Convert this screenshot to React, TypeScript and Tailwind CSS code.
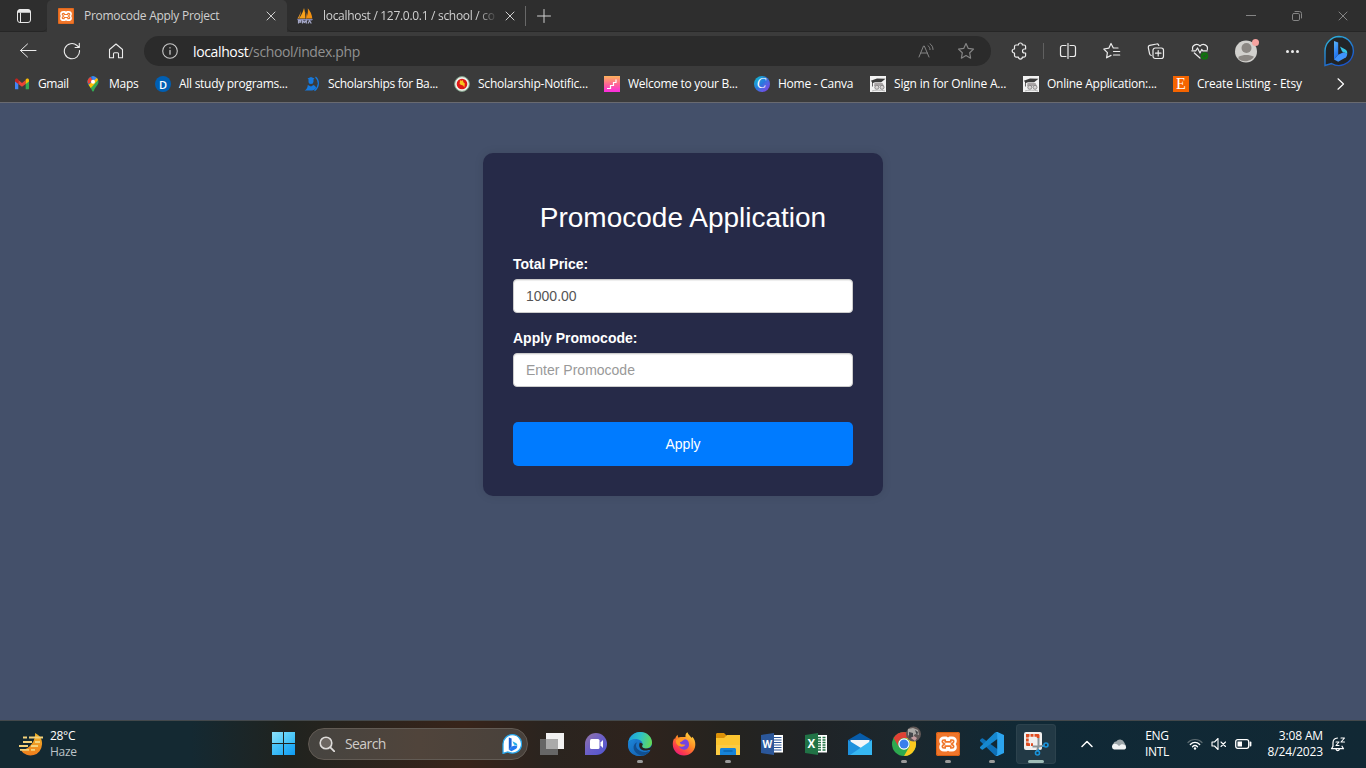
import React from "react";

type IconProps = { className?: string };

const line = {
  fill: "none",
  stroke: "currentColor",
  strokeLinecap: "round" as const,
  strokeLinejoin: "round" as const,
};

function XamppLogo({ className }: IconProps) {
  return (
    <svg viewBox="0 0 24 24" className={className}>
      <rect x="0" y="0" width="24" height="24" rx="2" fill="#f0762b" />
      <rect x="0.5" y="0.5" width="23" height="23" rx="2" fill="none" stroke="#d95f12" />
      <path
        d="M8 4.500h2c1 0 1.300.8 2 .8s1-.8 2-.8h2c3 0 4.800 1.800 4.800 4.300 0 1.300-.4 2.300-1.100 3.200.7.900 1.100 1.900 1.100 3.200 0 2.500-1.800 4.300-4.800 4.300h-2c-1 0-1.300-.8-2-.8s-1 .8-2 .8H8c-3 0-4.800-1.800-4.800-4.300 0-1.300.4-2.300 1.100-3.200-.7-.9-1.100-1.900-1.100-3.200C3.200 6.300 5 4.500 8 4.500z"
        fill="#fff"
      />
      <g fill="none" stroke="#f0762b" strokeWidth="1.700" strokeLinecap="round" strokeLinejoin="round">
        <path d="M9.200 9.800V8H8c-1.200 0-1.700.6-1.700 1.400C6.300 11 8 11.300 8.700 12c-.7.7-2.400 1-2.400 2.600 0 .8.5 1.400 1.700 1.400h1.200v-1.800h5.600V16H16c1.200 0 1.700-.6 1.700-1.400 0-1.600-1.700-1.900-2.400-2.600.7-.7 2.400-1 2.400-2.600 0-.8-.5-1.400-1.700-1.400h-1.200v1.800z" />
      </g>
    </svg>
  );
}

function PmaLogo() {
  return (
    <svg viewBox="0 0 16 16" className="size-4">
      <path d="M7 0C5.800 4.500 4 8 1.800 10.500h6.400C8.400 7 8 3.300 7 0z" fill="#f7a11b" />
      <path d="M10.800.3C11.200 4 10.600 7.500 9 10.500h6.300C14.900 6.500 13.200 3 10.800.3z" fill="#f29111" />
      <path d="M3.800 3C3.200 5.800 2 8.300.4 10.500h1.400c1.300-2.200 2-4.700 2-7.500z" fill="#e8962a" />
      <path d="M8.500 3.500c.6 2.300.6 4.700 0 7h1.300c.2-2.700-.2-5-1.300-7z" fill="#d9801a" />
      <path d="M0 11h16l-1 1.500H1z" fill="#8286b4" />
      <path d="M1.500 15.500v-2.800h2.200v1.500H1.800M5.500 15.500v-2.800l1.900 1.800 1.900-1.800v2.800M11 15.500l1.600-2.800 1.700 2.800" fill="none" stroke="#a6a9c9" strokeWidth="1.200" />
    </svg>
  );
}

function BingMark({ className }: IconProps) {
  return (
    <svg viewBox="0 0 32 32" className={className}>
      <defs>
        <linearGradient id="bingRing" x1="0" y1="0" x2="0.6" y2="1">
          <stop offset="0" stopColor="#2fb9dc" />
          <stop offset="1" stopColor="#1b55c9" />
        </linearGradient>
        <linearGradient id="bingB" x1="0" y1="0" x2="0.3" y2="1">
          <stop offset="0" stopColor="#5cb5f7" />
          <stop offset="1" stopColor="#1b6df0" />
        </linearGradient>
      </defs>
      <path d="M16 1.500a14.500 14.500 0 1 1-7.500 27L2 30.500V16A14.400 14.400 0 0 1 16 1.500z" fill="#222426" stroke="url(#bingRing)" strokeWidth="1.400" />
      <path d="M11 6l4.200 1.600v12.200L11 24.500z" fill="url(#bingB)" />
      <path d="M11 24.500l4.200-4.700 5.300-2.600 3.700 1.200c0 2.200-.6 3.600-2.400 4.700l-6.600 3.700z" fill="#3f93fb" />
      <path d="M17 11.500l5.400 3c1.500.9 2 2.100 1.800 4.200l-5.100-2.200z" fill="#36c5e6" />
    </svg>
  );
}

function BingSmall() {
  return (
    <svg viewBox="0 0 20 20" className="size-5">
      <path d="M10.300.7a9.200 9.200 0 1 1-4.500 17.200L1 19.400V10A9.300 9.300 0 0 1 10.300.7z" fill="#fff" stroke="#27a5ea" strokeWidth="1.300" />
      <path d="M6.800 3.500l2.800 1.100v8.200l-2.800 3z" fill="#1b62d4" />
      <path d="M6.800 15.800l3-3.200 3-1.200 2.400.9c0 1.300-.5 2.100-1.500 2.700l-4.300 2.300z" fill="#2378ef" />
      <path d="M10.500 7.300l3.400 1.800c1.100.7 1.500 1.600 1.300 3l-3.300-1.600z" fill="#25afe7" />
    </svg>
  );
}

function Graduate() {
  return (
    <svg viewBox="0 0 16 16" className="size-4">
      <rect width="16" height="16" fill="#f2f2f2" />
      <path d="M.8 4.700L7 2.500l8.500.3-4.300 3.500L5 6.300 2.800 7v3.500H2V6z" fill="#3b3b3b" />
      <path d="M4.500 7h8l1.500 3H4z" fill="#a9a4a5" />
      <circle cx="6.800" cy="11.300" r="2" fill="#d8d4d4" stroke="#8b8b8b" />
      <circle cx="12" cy="11.300" r="2" fill="#d8d4d4" stroke="#8b8b8b" />
      <path d="M2 15c3-1.200 9-1.200 13 0" stroke="#b5b5b5" fill="none" />
    </svg>
  );
}

function BookmarkIcon({ kind }: { kind: string }) {
  switch (kind) {
    case "gmail":
      return (
        <svg viewBox="0 0 16 16" className="size-4">
          <path d="M1 4v8.700c0 .3.300.6.600.6H4.300V6.500z" fill="#4285f4" />
          <path d="M15 4v8.700c0 .3-.3.600-.6.600h-2.700V6.500z" fill="#34a853" />
          <path d="M4.300 4.100L8 6.900l3.700-2.800v3.800L8 10.700 4.300 7.900z" fill="#ea4335" />
          <path d="M1 4.200c0-1.500 1.700-2 2.700-1.200l.6.500v4.400L1 5.500z" fill="#c5221f" />
          <path d="M15 4.200c0-1.500-1.700-2-2.700-1.200l-.6.500v4.400L15 5.500z" fill="#fbbc04" />
        </svg>
      );
    case "maps":
      return (
        <svg viewBox="0 0 16 16" className="size-4">
          <defs>
            <clipPath id="pin">
              <path d="M8 .3a5.500 5.500 0 0 1 5.500 5.500c0 3.500-3.400 5-4.500 9-.3 1.100-1.700 1.100-2 0-1.100-4-4.500-5.500-4.500-9A5.500 5.500 0 0 1 8 .3z" />
            </clipPath>
          </defs>
          <g clipPath="url(#pin)">
            <rect width="16" height="16" fill="#34a853" />
            <path d="M0 0h9L8 6 2 10H0z" fill="#1a73e8" />
            <path d="M0 0h5l3 5-5 3z" fill="#ea4335" />
            <path d="M7 0h9L8 6z" fill="#4285f4" />
            <path d="M2 10l11-9v3L5 13z" fill="#fbbc04" />
          </g>
          <circle cx="8" cy="5.800" r="2" fill="#fff" />
        </svg>
      );
    case "study":
      return (
        <div className="flex size-4 items-center justify-center rounded-full bg-[#005fb3] font-['Open_Sans',sans-serif] text-[11px] leading-none font-semibold text-white">
          D
        </div>
      );
    case "scholar":
      return (
        <svg viewBox="0 0 16 16" className="size-4">
          <path d="M3.500 2.500L7 1l3.500 1.500-1 .8v2.300a2.500 2.500 0 0 1-5 0V3.300z" fill="#1779dc" />
          <path d="M.5 14.500c2-.8 3-2.500 3.300-5.500L7 10.500 9.500 9c2 1 2.500 2 2.500 3-.9 1.300-2.500 2.300-4 2.500z" fill="#1779dc" />
          <path d="M11.500 1c4 3.500 4 9.500-1 13.800" fill="none" stroke="#1779dc" strokeWidth="1.200" />
        </svg>
      );
    case "bd":
      return (
        <svg viewBox="0 0 16 16" className="size-4">
          <circle cx="8" cy="8" r="7.400" fill="#eef2ec" stroke="#7e9f88" />
          <circle cx="8" cy="8" r="5.300" fill="#df1717" />
          <path d="M6 4.200l1.800.5 1-.7.6 2.300 1.400 1.300-.4 3.800-1.300-2L7.300 9 5.600 8z" fill="#f7c51e" />
        </svg>
      );
    case "stairs":
      return (
        <svg viewBox="0 0 16 16" className="size-4">
          <defs>
            <linearGradient id="stairsFill" x1="0" y1="0" x2="0" y2="1">
              <stop offset="0" stopColor="#ffb35c" />
              <stop offset="0.550" stopColor="#fd6199" />
              <stop offset="1" stopColor="#fb2be0" />
            </linearGradient>
          </defs>
          <rect width="16" height="16" fill="url(#stairsFill)" />
          <path d="M3 12.500h3.500v-3h3v-3h2.500v-3" fill="none" stroke="#fff" strokeWidth="1.200" />
        </svg>
      );
    case "canva":
      return (
        <div className="flex size-4 items-center justify-center rounded-full bg-linear-to-br from-[#0cc0c6] via-[#2c75df] to-[#7d2ae8] pr-px font-['Liberation_Serif',serif] text-[14px] leading-none text-white italic">
          C
        </div>
      );
    case "graduate":
      return <Graduate />;
    default:
      return (
        <div className="flex size-4 items-center justify-center bg-[#f56400] font-['Liberation_Serif',serif] text-[16px] leading-none text-white">
          E
        </div>
      );
  }
}

const bookmarks = [
  { kind: "gmail", label: "Gmail", box: "w-[71px]", track: "tracking-[-0.4px]" },
  { kind: "maps", label: "Maps", box: "w-[70px]", track: "tracking-[-0.25px]" },
  { kind: "study", label: "All study programs...", box: "w-[149px]", track: "tracking-[-0.28px]" },
  { kind: "scholar", label: "Scholarships for Ba...", box: "w-[150px]", track: "tracking-[-0.32px]" },
  { kind: "bd", label: "Scholarship-Notific...", box: "w-[150px]", track: "tracking-[-0.22px]" },
  { kind: "stairs", label: "Welcome to your B...", box: "w-[150px]", track: "tracking-[-0.28px]" },
  { kind: "canva", label: "Home - Canva", box: "w-[116px]", track: "tracking-[-0.25px]" },
  { kind: "graduate", label: "Sign in for Online A...", box: "w-[153px]", track: "tracking-[-0.18px]" },
  { kind: "graduate", label: "Online Application:...", box: "w-[150px]", track: "tracking-[-0.25px]" },
  { kind: "etsy", label: "Create Listing - Etsy", box: "w-[146px]", track: "tracking-[-0.2px]" },
];

function CloseIcon({ className }: IconProps) {
  return (
    <svg viewBox="0 0 10 10" className={className}>
      <path d="M1 1l8 8M9 1L1 9" {...line} />
    </svg>
  );
}

function TabStrip() {
  return (
    <div className="flex h-8 items-stretch bg-[#2e2e2e] text-[#d0d0d0]">
      <div className="flex w-[47px] items-center justify-center rounded-br-[5px] border-b border-[#262626]">
        <svg viewBox="0 0 16 16" className="size-4 text-[#e8e8e8]">
          <rect x="1.500" y="1.500" width="13" height="13" rx="2.500" {...line} />
          <path d="M1.500 3.500a2 2 0 0 1 2-2h9a2 2 0 0 1 2 2v1.300h-13z" fill="currentColor" />
          <path d="M4.500 5v9" {...line} />
        </svg>
      </div>
      <div className="flex w-60 items-center rounded-t-[5px] bg-[#3b3b3b] pr-[11px] pl-[11px]">
        <XamppLogo className="size-4" />
        <span className="ml-[10px] flex-1 text-[12px] tracking-[-0.27px] whitespace-nowrap">Promocode Apply Project</span>
        <CloseIcon className="size-[10px]" />
      </div>
      <div className="flex flex-1 items-center rounded-bl-[5px] border-b border-[#262626] pl-[10px]">
        <PmaLogo />
        <span className="ml-[10px] w-[175px] mask-r-from-88% text-[12px] tracking-[-0.3px] whitespace-nowrap">
          localhost / 127.0.0.1 / school / co
        </span>
        <CloseIcon className="ml-[7px] size-[10px]" />
        <div className="ml-[10px] h-5 w-px bg-[#686868]" />
        <svg viewBox="0 0 14 14" className="ml-[11px] size-[14px]">
          <path d="M7 .5v13M.5 7h13" {...line} />
        </svg>
        <div className="ml-auto flex w-[138px] text-[#858585]">
          <div className="flex w-[46px] items-center justify-center">
            <div className="h-px w-[10px] bg-[#858585]" />
          </div>
          <svg viewBox="0 0 10 10" className="mx-[18px] size-[10px]">
            <rect x="0.500" y="2.500" width="7" height="7" rx="1.300" {...line} />
            <path d="M3 .5h4.500a2 2 0 0 1 2 2V7" {...line} />
          </svg>
          <CloseIcon className="mx-[18px] size-[10px]" />
        </div>
      </div>
    </div>
  );
}

function Slot({ children }: { children: React.ReactNode }) {
  return <div className="flex w-11 shrink-0 items-center justify-center">{children}</div>;
}

function AddressBar() {
  return (
    <div className="flex h-[38px] items-center pl-[6px] text-[#ececec]">
      <Slot>
        <svg viewBox="0 0 18 18" className="size-[18px]">
          <path d="M17 8.500H1.500M8.500 2L1.500 8.500l7 6.500" {...line} />
        </svg>
      </Slot>
      <Slot>
        <svg viewBox="0 0 18 18" className="size-[18px]">
          <path d="M16.500 8.500A7.600 7.600 0 1 1 14 3.500L16 5.300M16.300 1.300v4.200h-4.200" {...line} strokeWidth="1.100" />
        </svg>
      </Slot>
      <Slot>
        <svg viewBox="0 0 16 16" className="size-4">
          <path d="M8 1l6.500 5.500v8.200h-4v-4a1 1 0 0 0-1-1h-3a1 1 0 0 0-1 1v4h-4V6.500z" {...line} strokeWidth="1.100" />
        </svg>
      </Slot>
      <div className="ml-[6px] flex h-[30px] w-[847px] items-center rounded-full bg-[#2b2b2b] pr-4 pl-[18px]">
        <svg viewBox="0 0 16 16" className="size-4 text-[#c8c8c8]">
          <circle cx="8" cy="8" r="7.300" {...line} strokeWidth="1.100" />
          <path d="M8 7.300v3.900M8 4.700v.2" {...line} strokeWidth="1.300" />
        </svg>
        <span className="ml-[15px] flex-1 text-[14px] tracking-[-0.37px] text-[#919191]">
          <span className="text-white">localhost</span>/school/index.php
        </span>
        <svg viewBox="0 0 16 16" className="size-4 text-[#858585]">
          <path d="M1 14L5.500 3h.8L11 14M2.700 10h6.700M10 2.700c1.300 1 2 2.200 2 3.900M12 .8c2 1.400 3 3.300 3 5.700" {...line} />
        </svg>
        <svg viewBox="0 0 18 18" className="ml-[23px] size-[18px] text-[#858585]">
          <path d="M9 1.500l2.300 4.900 5.200.7-3.800 3.700.9 5.400L9 13.600l-4.600 2.600.9-5.400L1.500 7.100l5.200-.7z" {...line} strokeWidth="1.200" />
        </svg>
      </div>
      <div className="ml-[7px] flex">
        <Slot>
          <svg viewBox="0 0 18 18" className="size-[18px]">
            <path d="M5 3h2.400a2 2 0 0 1 4 0h1.700c1 0 1.500.5 1.500 1.500V7h-1.100a2 2 0 0 0 0 4h1.100v2.600c0 1-.5 1.500-1.500 1.500h-1.700a2 2 0 0 1-4 0H5c-1 0-1.500-.5-1.500-1.500V11h-.3a2 2 0 0 1 0-4h.3V4.500C3.500 3.500 4 3 5 3z" {...line} strokeWidth="1.200" />
          </svg>
        </Slot>
      </div>
      <div className="mr-[2px] ml-px h-4 w-px bg-[#606060]" />
      <Slot>
        <svg viewBox="0 0 18 16" className="h-4 w-[18px]">
          <path d="M7 2.500H3.500a2 2 0 0 0-2 2v7a2 2 0 0 0 2 2H7M11 2.500h3.500a2 2 0 0 1 2 2v7a2 2 0 0 1-2 2H11M9 .5v15" {...line} strokeWidth="1.200" />
        </svg>
      </Slot>
      <Slot>
        <svg viewBox="0 0 18 18" className="size-[18px]">
          <path d="M15 6H10.300L8 1.500 5.800 6.200.8 7l3.600 3.600-.8 5.200L8 13.400M10.500 9.500h6.200M10.500 13h6.200M11 6h1" {...line} strokeWidth="1.200" />
        </svg>
      </Slot>
      <Slot>
        <svg viewBox="0 0 18 18" className="size-[18px]">
          <rect x="6" y="6" width="10.500" height="10.500" rx="2.200" {...line} strokeWidth="1.200" />
          <path d="M11.200 8.500v5.500M8.500 11.200H14M4.300 13.500c-1-.2-1.500-.7-1.700-1.600L1.300 5.700c-.2-1.100.3-2 1.400-2.300L9.500 2c1.200-.3 2 .4 2.300 1.500" {...line} strokeWidth="1.200" />
        </svg>
      </Slot>
      <Slot>
        <svg viewBox="0 0 18 18" className="size-[18px]">
          <path d="M1.700 7.500C.6 3 6 .8 9 4c3-3.200 8.400-1 7.300 3.500M.8 8.800h4l1.700-2.800L9 11l1.700-3.600 1.100 1.400h4.500M3.300 11L9 16" {...line} strokeWidth="1.200" />
          <circle cx="13.500" cy="14" r="3.800" fill="#11710f" />
          <path d="M12 14l1.200 1.200 2-2.300" fill="none" stroke="#3b3b3b" />
        </svg>
      </Slot>
      <div className="ml-[3px] flex">
        <Slot>
          <svg viewBox="0 0 24 24" className="size-6">
            <circle cx="11" cy="12.500" r="11" fill="#d1d0cd" />
            <circle cx="11.500" cy="9" r="5" fill="#8b8783" />
            <path d="M3.500 17.800c4.500-2.300 11-2.300 15.500 0a11 11 0 0 1-15.500 2.200z" fill="#8b8783" />
            <circle cx="20.500" cy="3.500" r="3.500" fill="#f5a3a0" />
          </svg>
        </Slot>
      </div>
      <div className="ml-px flex">
        <Slot>
          <div className="flex gap-[2px]">
            <span className="size-[3px] rounded-full bg-[#ececec]" />
            <span className="size-[3px] rounded-full bg-[#ececec]" />
            <span className="size-[3px] rounded-full bg-[#ececec]" />
          </div>
        </Slot>
      </div>
      <div className="ml-[3px] flex">
        <Slot>
          <BingMark className="size-8" />
        </Slot>
      </div>
    </div>
  );
}

function BookmarksBar() {
  return (
    <div className="flex h-8 items-center border-b border-[#696a70] pb-[5px] pl-[14px] text-white">
      {bookmarks.map((b) => (
        <div key={b.label} className={`flex shrink-0 items-center gap-2 ${b.box}`}>
          <BookmarkIcon kind={b.kind} />
          <span className={`text-[12px] leading-4 whitespace-nowrap ${b.track}`}>{b.label}</span>
        </div>
      ))}
      <svg viewBox="0 0 8 12" className="ml-[18px] h-3 w-2">
        <path d="M1 .8L6.500 6 1 11.200" {...line} strokeWidth="1.200" />
      </svg>
    </div>
  );
}

function PromoForm() {
  return (
    <main className="flex flex-1 items-start justify-center bg-[#44506a] pt-[50px] font-['Liberation_Sans',Arial,sans-serif]">
      <div className="h-[343px] w-[400px] rounded-[10px] bg-[#262a48] p-[30px] text-[14px] leading-5 text-white shadow-[0_0_10px_rgba(0,0,0,0.1)]">
        <h2 className="mt-[19px] mb-[21px] text-center text-[28px] leading-[31px]">Promocode Application</h2>
        <label className="mb-[5px] block font-bold">Total Price:</label>
        <input
          className="mb-[15px] block h-[34px] w-full rounded-[4px] border border-[#ccc] bg-white px-3 text-[#555] shadow-[inset_0_1px_1px_rgba(0,0,0,0.075)]"
          defaultValue="1000.00"
        />
        <label className="mb-[5px] block font-bold">Apply Promocode:</label>
        <input
          className="block h-[34px] w-full rounded-[4px] border border-[#ccc] bg-white px-3 shadow-[inset_0_1px_1px_rgba(0,0,0,0.075)] placeholder:text-[#999]"
          placeholder="Enter Promocode"
        />
        <button className="mt-[35px] h-11 w-full rounded-[5px] bg-[#007bff]">Apply</button>
      </div>
    </main>
  );
}

function TaskSlot({ children, open = false, active = false }: { children: React.ReactNode; open?: boolean; active?: boolean }) {
  return (
    <div className={`mx-[2px] flex h-10 w-10 shrink-0 flex-col items-center rounded-[4px] pt-2 ${active ? "bg-[#223945] ring-1 ring-[#2c424d] ring-inset" : ""}`}>
      {children}
      {open && <div className={`mt-1 h-[3px] shrink-0 rounded-full ${active ? "w-4 bg-[#9fbdb8]" : "w-[6px] bg-[#9a9a9a]"}`} />}
    </div>
  );
}

function TaskApps() {
  return (
    <div className="ml-[2px] flex items-center">
      <TaskSlot>
        <svg viewBox="0 0 24 24" className="size-6">
          <rect x="6" y="1" width="18" height="16" fill="#f1f1f1" />
          <rect x="0" y="7" width="18" height="16" fill="#666" />
          <rect x="6" y="7" width="12" height="10" fill="#aaa" />
        </svg>
      </TaskSlot>
      <TaskSlot>
        <svg viewBox="0 0 24 24" className="size-6">
          <defs>
            <linearGradient id="chatFill" x1="0" y1="0" x2="1" y2="1">
              <stop offset="0" stopColor="#9575a5" />
              <stop offset="0.500" stopColor="#6b5fc8" />
              <stop offset="1" stopColor="#4f55d0" />
            </linearGradient>
          </defs>
          <path d="M12 1a11 11 0 1 1 0 22H1V12A11 11 0 0 1 12 1z" fill="url(#chatFill)" />
          <rect x="6" y="7" width="9.500" height="10" rx="1.500" fill="#fff" />
          <path d="M16.500 10.500L19 8v8l-2.500-2.500z" fill="#fff" />
        </svg>
      </TaskSlot>
      <TaskSlot open>
        <svg viewBox="0 0 24 24" className="size-6">
          <defs>
            <linearGradient id="edgeTop" x1="0" y1="0.300" x2="1" y2="0.500">
              <stop offset="0" stopColor="#1ba0dc" />
              <stop offset="0.500" stopColor="#2fc2c5" />
              <stop offset="1" stopColor="#65d955" />
            </linearGradient>
            <linearGradient id="edgeLow" x1="0" y1="0" x2="0.500" y2="1">
              <stop offset="0" stopColor="#1c86d9" />
              <stop offset="1" stopColor="#1669b9" />
            </linearGradient>
          </defs>
          <circle cx="12" cy="12" r="12" fill="#1976cb" />
          <path d="M15 13.500l9-3c.3 5-3 6.500-6.500 6.300l5 1.500 2-4v-4z" fill="#28241f" />
          <path d="M.3 10.500C1.300 4.200 6.200 0 12.200 0 19.200 0 24 5 24 10.200c0 3.900-3 6.300-6.300 6.300-2.900 0-4.600-1.400-3.700-2.700 1.100-1.600.7-5.800-4.500-6.600C5.300 6.500 1.800 8 .3 10.500z" fill="url(#edgeTop)" />
          <path d="M.1 12.500C.8 9.500 4.200 6.900 9 7.200c-3 1.500-4.300 4.300-3.600 7.500.8 4.200 4.600 7.600 9.100 8.900C7 25.500-.6 20.600.1 12.500z" fill="url(#edgeLow)" />
          <path d="M9.300 10.300c-2 2.200-1.400 5.300.8 7.300 3 2.800 8.200 3 12.200.8-1.700 2.800-5 5-8.500 5.300C4.500 21.500 3.200 12.400 9.300 10.300z" fill="#104f91" />
          <path d="M11.800 10.500c1.500.6 3 .8 3 2 0 .8-1.300 1-.4 2.500.8 1.300 3.600 2 6.300 1.200.9-.3 1.800-.6 2.200-.3-3.500 5-14.400 2.800-11.100-5.400z" fill="#28241f" />
        </svg>
      </TaskSlot>
      <TaskSlot>
        <svg viewBox="0 0 24 24" className="size-6">
          <defs>
            <linearGradient id="foxFill" x1="0.900" y1="0" x2="0.200" y2="1">
              <stop offset="0" stopColor="#ffe142" />
              <stop offset="0.450" stopColor="#ff8b24" />
              <stop offset="0.800" stopColor="#fb3750" />
              <stop offset="1" stopColor="#e31587" />
            </linearGradient>
          </defs>
          <path d="M5.500 2.800l.6 2.600 2.700-.5L13.500 5C13.200 3 14 1 15.500.3c.3 2.400 2.700 3.200 4.200 5.800l.6-1.300C22.500 7 23.500 10 23.300 13 23 19 18 23.500 12 23.500S1 19 .8 12.800c-.1-2.500.4-4.500 1.400-6.500l.7 1C3.400 5.500 4.300 4 5.500 2.800z" fill="url(#foxFill)" />
          <path d="M8.200 9.700c2-.3 2.500-1.500 4.300-2.300 2.800-.4 4.500 2 4.500 4.800a5 5 0 0 1-10 1z" fill="#7345e0" />
          <path d="M4 8l4-2 3.800 1-2 2.300-2.200 1.200 1.500 1.700 4.500.6c-1.800 2-4 2.700-6.800 1.200C4.500 12.500 3.500 10.500 4 8z" fill="#ff9a24" />
        </svg>
      </TaskSlot>
      <TaskSlot open>
        <svg viewBox="0 0 24 24" className="size-6">
          <path d="M0 2.500C0 1.500.6 1 1.500 1H8l2.500 2.500v4H0z" fill="#dc9108" />
          <path d="M0 6h8l3-3h13v20H0z" fill="#fcc530" />
          <path d="M0 13h24v10H0z" fill="#fccb42" />
          <path d="M4 23v-5.500C4 16.500 4.800 16 5.700 16h12.600c1 0 1.700.5 1.700 1.500V23z" fill="#1683d8" />
          <path d="M7.500 19h9" stroke="#0b64af" strokeWidth="1.500" />
        </svg>
      </TaskSlot>
      <TaskSlot>
        <OfficeIcon letter="W" />
      </TaskSlot>
      <TaskSlot>
        <OfficeIcon letter="X" />
      </TaskSlot>
      <TaskSlot>
        <svg viewBox="0 0 24 24" className="size-6">
          <path d="M0 8l12-7 12 7v7H0z" fill="#075caa" />
          <path d="M2.500 8h19v9h-19z" fill="#f3f6f8" />
          <path d="M0 8l13 8-5 7H0z" fill="#1e91dd" />
          <path d="M24 8v15H2l11-7.500z" fill="#36b7f2" />
        </svg>
      </TaskSlot>
      <TaskSlot open>
        <svg viewBox="0 0 30 30" className="-mt-[6px] -mr-[6px] size-[30px] shrink-0">
          <circle cx="12" cy="18" r="12" fill="#2da94f" />
          <path d="M1.600 12A12 12 0 0 1 22.400 12H12a6 6 0 0 0-5.200 9z" fill="#df4135" />
          <path d="M22.400 12A12 12 0 0 1 12 30l5.200-9A6 6 0 0 0 12 12z" fill="#fcc91e" />
          <circle cx="12" cy="18" r="5.700" fill="#fff" />
          <circle cx="12" cy="18" r="4.500" fill="#397fed" />
          <circle cx="21.500" cy="8" r="7.500" fill="#5f5756" />
          <path d="M16 3l5-1 5 2 1 5-4-1-3 4-4-3z" fill="#aaa8a5" />
          <path d="M17 6l4 1v4l-4 1zM23 4l3 2-1 4z" fill="#43464b" />
          <path d="M19 12l3-2 3 2-2 3z" fill="#c79ca0" />
        </svg>
      </TaskSlot>
      <TaskSlot open>
        <XamppLogo className="size-6" />
      </TaskSlot>
      <TaskSlot open>
        <svg viewBox="0 0 24 24" className="size-6">
          <path d="M1.300 6.800L0 8v1l15 14.500 3 .5V17.500L3 6.500c-.6-.4-1.200-.2-1.700.3z" fill="#0e70b7" />
          <path d="M1.300 17.200L0 16v-1L15 .5l3-.5v6.500L3 17.500c-.6.4-1.200.2-1.700-.3z" fill="#1688d0" />
          <path d="M17.500 0L24 3v18l-6.500 3c-.8.2-1.700-.2-2.300-.7 1 .4 2-.3 2-1.300V2c0-1-1-1.700-2-1.300.6-.5 1.500-.9 2.300-.7z" fill="#2ca4ee" />
        </svg>
      </TaskSlot>
      <TaskSlot open active>
        <svg viewBox="0 0 24 24" className="size-6 overflow-visible">
          <rect x="0" y="0" width="18" height="18" rx="2" fill="#f1f0ef" />
          <path d="M2 2h3.500v2.700H4.700v.8H2zM6.500 2h3v2.700h-3zM10.500 2H14c1 0 1.500.5 1.500 1.500V6h-2.700V4.700h-2.300zM2 6.500h2.700v3H2zM2 10.500h2.700v.8H6V14H3.500C2.500 14 2 13.500 2 12.500zM7 11.300h2V14H7z" fill="#df4c20" />
          <path d="M14.500 6v8L13 19M8.500 14.500h6.500l5-1" fill="none" stroke="#8b9497" strokeWidth="2" />
          <circle cx="13.500" cy="21" r="2" fill="none" stroke="#1993db" strokeWidth="1.600" />
          <circle cx="22" cy="13" r="2" fill="none" stroke="#1993db" strokeWidth="1.600" />
          <path d="M14 19l1-2M18 14.500l2-.5" fill="none" stroke="#1993db" strokeWidth="1.200" />
        </svg>
      </TaskSlot>
    </div>
  );
}

function OfficeIcon({ letter }: { letter: "W" | "X" }) {
  const word = letter === "W";
  const color = word ? "#2b579a" : "#217346";
  return (
    <svg viewBox="0 0 24 24" className="size-6">
      <rect x="11" y="3" width="12" height="17.500" fill="#fff" />
      {word ? (
        <path d="M13 5.500h8.500M13 8h8.500M13 10.500h8.500M13 13h8.500M13 15.500h8.500M13 18h8.500" stroke={color} />
      ) : (
        <path d="M14 5.500h3M18.500 5.500h3M14 8h3M18.500 8h3M14 10.500h3M18.500 10.500h3M14 13h3M18.500 13h3M14 15.500h3M18.500 15.500h3M14 18h3M18.500 18h3" stroke={color} strokeWidth="1.300" />
      )}
      <path d="M1 3l13-2v22L1 21z" fill={color} />
      <text x="7.400" y="15.800" textAnchor="middle" fontFamily="Open Sans, sans-serif" fontWeight="700" fontSize={word ? 10 : 11.500} fill="#fff">
        {letter}
      </text>
    </svg>
  );
}

function Tray() {
  return (
    <div className="ml-auto flex items-center text-white">
      <svg viewBox="0 0 12 8" className="h-2 w-3">
        <path d="M1 6.500l5-5 5 5" {...line} strokeWidth="1.500" />
      </svg>
      <svg viewBox="0 0 16 12" className="ml-[18px] h-3 w-4">
        <path d="M2.500 7.500a3 3 0 0 1 2.700-4A4.500 4.500 0 0 1 13 4l2 4z" fill="#9da6aa" />
        <path d="M3 11.500A3 3 0 0 1 3 5.800c2-.3 3.500.5 5 2l2.500-1.500a3 3 0 0 1 3 .8 2.300 2.300 0 0 1 0 4.400z" fill="#f1f3f4" />
      </svg>
      <div className="ml-[17px] w-[26px] pt-px text-center text-[12px] leading-4 tracking-[-0.3px]">
        <div>ENG</div>
        <div>INTL</div>
      </div>
      <svg viewBox="0 0 16 12" className="ml-[17px] h-3 w-4">
        <path d="M1 4.500C4.500.5 11.500.5 15 4.500" {...line} stroke="#5e6c72" strokeWidth="1.200" />
        <path d="M3.300 6.500c2.700-2.800 6.700-2.800 9.400 0M5.500 8.700c1.500-1.400 3.500-1.400 5 0" {...line} strokeWidth="1.300" />
        <circle cx="8" cy="10.500" r="1.200" fill="#fff" />
      </svg>
      <svg viewBox="0 0 16 14" className="ml-[8px] h-[14px] w-4">
        <path d="M1 5h2.500L7 1.500v11L3.500 9H1zM10 5l4.500 4.500M14.500 5L10 9.500" {...line} strokeWidth="1.100" />
      </svg>
      <svg viewBox="0 0 17 10" className="ml-2 h-[10px] w-[17px]">
        <rect x="0.700" y="0.700" width="13" height="8.600" rx="2" {...line} strokeWidth="1.300" />
        <rect x="2.500" y="2.500" width="4.500" height="5" fill="#fff" />
        <path d="M15.500 3.500v3" {...line} strokeWidth="1.800" />
      </svg>
      <div className="ml-[11px] w-[60px] text-right text-[12px] leading-4 tracking-[-0.15px] whitespace-nowrap">
        <div>3:08 AM</div>
        <div className="-ml-2">8/24/2023</div>
      </div>
      <svg viewBox="0 0 16 16" className="mr-5 ml-[7px] size-4">
        <path d="M7.500 2C4.500 2.300 3 4.200 3 6.700v3.500l-1.500 2.500h12l-1.500-2.500M6 13.300c.7 1.700 2.700 1.700 3.400 0" {...line} strokeWidth="1.200" />
        <path d="M6 6h3l-3 3.500h3M11 2h3.500L11 6h3.500" {...line} strokeWidth="1.100" />
      </svg>
    </div>
  );
}

function Taskbar() {
  return (
    <footer className="flex h-12 items-center border-t border-[#43484b] bg-[linear-gradient(90deg,#142932_0%,#142932_14%,#20231f_21%,#38241a_34%,#2a241f_40%,#2e231d_47%,#25231f_53%,#202326_59%,#1b272d_66%,#102936_75%,#112834_100%)] pb-[2px]">
      <div className="flex w-[262px] shrink-0 items-center pl-[18px]">
        <svg viewBox="0 0 26 24" className="h-6 w-[26px]">
          <defs>
            <linearGradient id="moonFill" x1="0" y1="0" x2="0" y2="1">
              <stop offset="0" stopColor="#efb429" />
              <stop offset="1" stopColor="#f07d1c" />
            </linearGradient>
          </defs>
          <path d="M17 1c5 2.500 7.500 6.500 7 11.500a11.500 11.500 0 0 1-21 6C9 18 18 11 17 1z" fill="url(#moonFill)" />
          <path d="M5 5.500h4M11 5.500h14M5 10h9M17 10h5M1 14h9M13 14h7M2 17.800h9M13 17.800h4" stroke="#f4d27b" strokeWidth="1.800" />
        </svg>
        <div className="ml-[6px] text-[12px] leading-4 tracking-[-0.3px]">
          <div className="text-white">28°C</div>
          <div className="text-[#bdc4c8]">Haze</div>
        </div>
      </div>
      <div className="ml-[10px] grid h-[23px] w-[23px] shrink-0 grid-cols-2 gap-px">
        <div className="bg-linear-to-br from-[#8be0fb] to-[#4dc9f7]" />
        <div className="bg-linear-to-br from-[#69d6fb] to-[#31b9f5]" />
        <div className="bg-linear-to-br from-[#50c9f9] to-[#26aef4]" />
        <div className="bg-linear-to-br from-[#35baf7] to-[#0c9bf3]" />
      </div>
      <div className="ml-[13px] flex h-8 w-[220px] shrink-0 items-center rounded-full border border-[#625b54] bg-linear-to-r from-[#464440] via-[#50443b] to-[#48413b] px-[10px]">
        <svg viewBox="0 0 16 16" className="size-4 text-[#dedcda]">
          <circle cx="7" cy="7" r="5.800" fill="#6d6762" stroke="currentColor" strokeWidth="1.600" />
          <path d="M11.300 11.300l4 4" {...line} strokeWidth="1.800" />
        </svg>
        <span className="ml-[10px] flex-1 text-[14px] tracking-[-0.6px] text-[#d0ccc8]">Search</span>
        <div className="-mr-[5px]">
          <BingSmall />
        </div>
      </div>
      <TaskApps />
      <Tray />
    </footer>
  );
}

export default function App() {
  return (
    <div className="flex h-[768px] w-[1366px] flex-col overflow-hidden font-['Open_Sans','Noto_Sans',sans-serif]">
      <header className="h-[103px] shrink-0 bg-[#3b3b3b]">
        <TabStrip />
        <AddressBar />
        <div className="h-px" />
        <BookmarksBar />
      </header>
      <PromoForm />
      <Taskbar />
    </div>
  );
}
